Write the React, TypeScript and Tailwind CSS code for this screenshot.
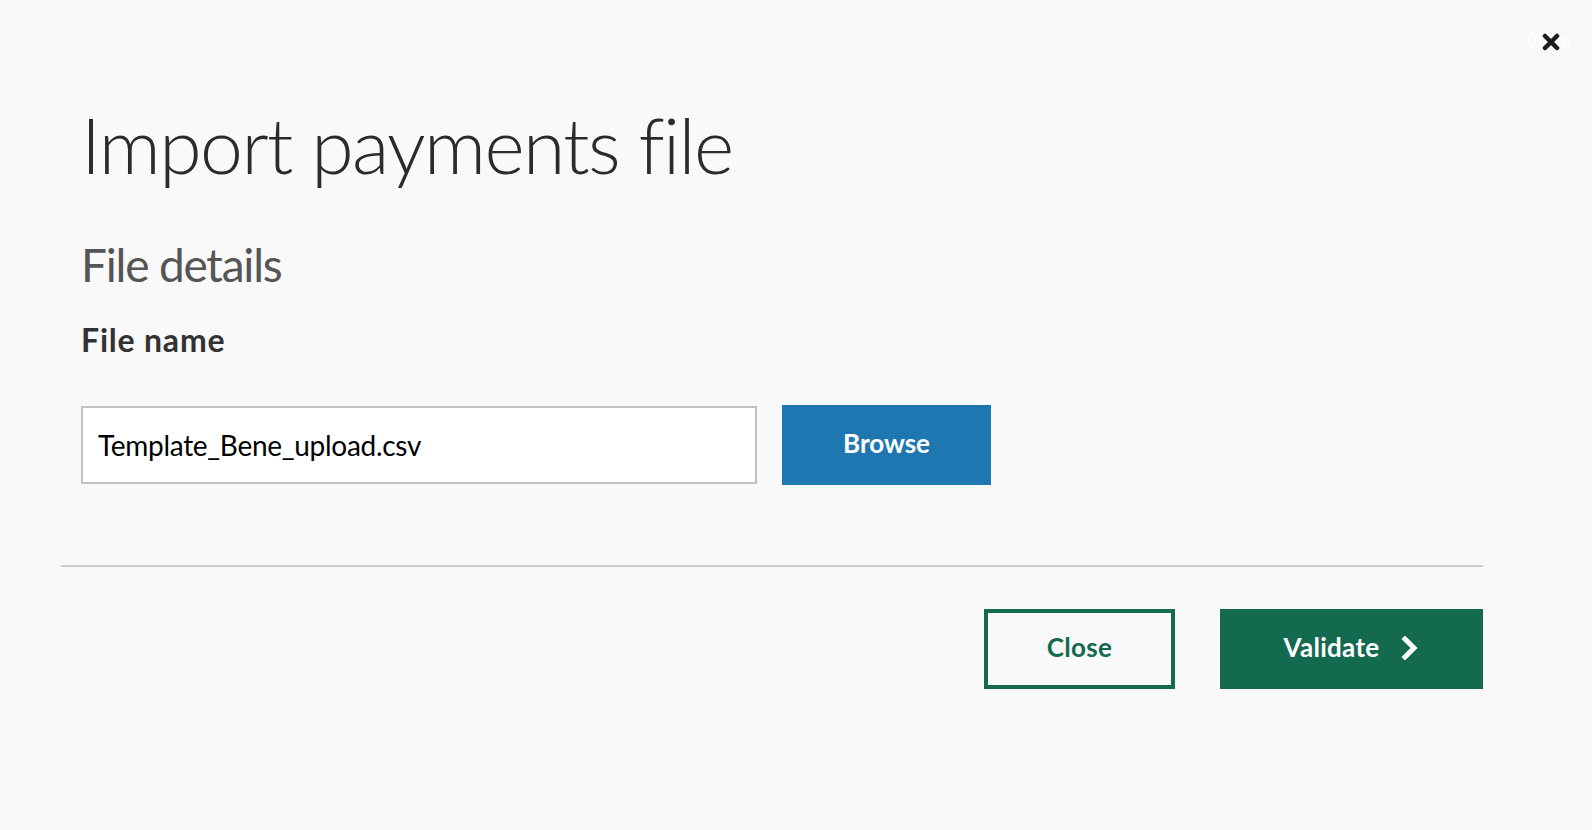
import React from "react";

function ChevronRight() {
  return (
    <svg width="18" height="24" viewBox="0 0 18 24" fill="none">
      <polyline
        points="4,3 13,12 4,21"
        stroke="#ffffff"
        strokeWidth="5"
        strokeLinecap="square"
        strokeLinejoin="miter"
      />
    </svg>
  );
}

function CloseIcon() {
  return (
    <svg width="18" height="18" viewBox="0 0 18 18">
      <line x1="3" y1="3" x2="15" y2="15" stroke="#1e1e1e" strokeWidth="4.5" strokeLinecap="round" />
      <line x1="15" y1="3" x2="3" y2="15" stroke="#1e1e1e" strokeWidth="4.5" strokeLinecap="round" />
    </svg>
  );
}

export default function App() {
  return (
    <div className="min-h-screen w-full bg-[#f9f9f9] font-['Lato',sans-serif] text-[#333333]">
      {/* top bar with the dismiss control */}
      <div className="flex h-[106px] justify-end pr-[32px] pt-[33px]">
        <button className="relative h-[18px] w-[18px]">
          <span className="absolute -left-[16px] top-[-4px] text-[18px] font-bold leading-[22px] text-white">
            Close
          </span>
          <span className="relative block">
            <CloseIcon />
          </span>
        </button>
      </div>

      <div className="ml-[61px] w-[1422px]">
        <div className="pl-[20px]">
          <h1 className="text-[77px] font-light leading-[77px] tracking-[-1.6px] text-[#2b2b2b]">
            Import payments file
          </h1>
          <h2 className="mt-[59px] text-[46px] font-normal leading-[46px] tracking-[-1.2px] text-[#555555]">
            File details
          </h2>
          <div className="mt-[36px] text-[32px] font-bold leading-[32px] tracking-[0.8px] text-[#333333]">
            File name
          </div>
          <div className="mt-[49px] flex items-center gap-[25px]">
            <div className="flex h-[78px] w-[676px] items-center border-2 border-[#c2c2c2] bg-white pl-[15px] text-[28px] tracking-[-0.3px] text-black">
              Template_Bene_upload.csv
            </div>
            <button className="flex h-[80px] w-[209px] items-center justify-center bg-[#1f77b1] pb-[3px] text-[26px] font-bold text-white">
              Browse
            </button>
          </div>
        </div>

        <div className="mt-[80px] h-[2px] w-full bg-[#cbcbcb]" />

        <div className="mt-[42px] flex justify-end gap-[45px]">
          <button className="flex h-[80px] w-[191px] items-center justify-center border-4 border-[#136a4f] pb-[3px] text-[26px] font-bold tracking-[0.3px] text-[#136a4f]">
            Close
          </button>
          <button className="flex h-[80px] w-[263px] items-center justify-center gap-[22px] bg-[#136a4f] pb-[3px] text-[26px] font-bold tracking-[0.3px] text-white">
            <span>Validate</span>
            <ChevronRight />
          </button>
        </div>
      </div>
    </div>
  );
}
